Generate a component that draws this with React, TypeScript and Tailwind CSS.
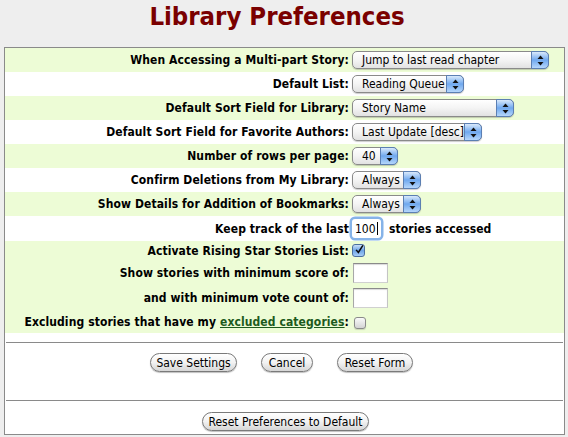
import React from "react";

function Arrows() {
  return (
    <svg width="7" height="11" viewBox="0 0 7 11" className="block">
      <polygon points="3.5,0.5 6.5,4 0.5,4" fill="#111" />
      <polygon points="0.5,7 6.5,7 3.5,10.5" fill="#111" />
    </svg>
  );
}

function Select({ value, className }: { value: string; className: string }) {
  return (
    <div
      className={
        "relative flex h-[18px] items-center rounded-[5px] border border-[#8a8a8a] bg-linear-to-b from-white via-[#f4f4f4] to-[#e2e2e2] shadow-[0_1px_1px_rgba(0,0,0,0.2)] " +
        className
      }
    >
      <span className="pl-[9px] text-[12px] leading-none text-black">{value}</span>
      <div className="absolute -top-px -right-px -bottom-px flex w-[18px] items-center justify-center rounded-r-[5px] border border-[#5b7fb3] bg-linear-to-b from-[#d9e9fb] via-[#6fa8ee] to-[#b5d6fb]">
        <Arrows />
      </div>
    </div>
  );
}

function Row({
  label,
  children,
  className,
}: {
  label: React.ReactNode;
  children?: React.ReactNode;
  className: string;
}) {
  return (
    <div className={"flex items-center " + className}>
      <div className="w-[344px] shrink-0 text-right text-[12px] font-bold leading-none tracking-[0.1px] text-black">
        {label}
      </div>
      <div className="ml-[3px] flex items-center">{children}</div>
    </div>
  );
}

function TextBox() {
  return (
    <div className="ml-[1px] h-[20px] w-[35px] border border-t-[#8a8a8a] border-r-[#c4c4c4] border-b-[#d0d0d0] border-l-[#a8a8a8] bg-white shadow-[inset_0_1px_1px_rgba(0,0,0,0.15)]" />
  );
}

function AquaButton({ children, className }: { children: React.ReactNode; className: string }) {
  return (
    <div
      className={
        "flex h-[19px] items-center justify-center rounded-full border border-[#7a7a7a] bg-linear-to-b from-white via-[#f2f2f2] to-[#d6d6d6] text-[12px] leading-none text-black shadow-[0_1px_1px_rgba(0,0,0,0.25)] " +
        className
      }
    >
      {children}
    </div>
  );
}

export default function App() {
  const green = "bg-[#edfcd6]";
  return (
    <div className="h-[437px] w-[568px] overflow-hidden bg-[#eeeeee] font-['DejaVu_Sans_Condensed',sans-serif]">
      <div className="h-[47px] pr-[14px] pt-[1px] text-center text-[25.5px] font-bold leading-[30px] text-[#7a0000]">
        Library Preferences
      </div>
      <div className="ml-[4px] w-[561px] border border-[#8a8a8a] bg-white">
        <Row label="When Accessing a Multi-part Story:" className={"h-[24px] " + green}>
          <Select value="Jump to last read chapter" className="w-[197px]" />
        </Row>
        <Row label="Default List:" className="h-[24px]">
          <Select value="Reading Queue" className="w-[112px]" />
        </Row>
        <Row label="Default Sort Field for Library:" className={"h-[24px] " + green}>
          <Select value="Story Name" className="w-[162px]" />
        </Row>
        <Row label="Default Sort Field for Favorite Authors:" className="h-[24px]">
          <Select value="Last Update [desc]" className="w-[130px]" />
        </Row>
        <Row label="Number of rows per page:" className={"h-[24px] " + green}>
          <Select value="40" className="w-[46px]" />
        </Row>
        <Row label="Confirm Deletions from My Library:" className="h-[24px]">
          <Select value="Always" className="w-[69px]" />
        </Row>
        <Row label="Show Details for Addition of Bookmarks:" className={"h-[24px] " + green}>
          <Select value="Always" className="w-[69px]" />
        </Row>
        <Row label="Keep track of the last" className="h-[25px]">
          <div className="flex h-[19px] w-[29px] items-center rounded-[3px] bg-white pl-[3px] text-[12px] leading-none text-black ring-[2.5px] ring-[#86b3e8]">
            100<span className="ml-px inline-block h-[13px] w-px bg-black" />
          </div>
          <span className="ml-[8px] text-[12px] font-bold leading-none tracking-[0.1px] text-black">stories accessed</span>
        </Row>
        <div className={green}>
          <Row label="Activate Rising Star Stories List:" className="h-[19px]">
            <div className="flex h-[13px] w-[13px] items-center justify-center rounded-[3px] border border-[#4b6e9f] bg-linear-to-b from-[#c9def7] via-[#6ea4e6] to-[#a5cdf7]">
              <svg width="12" height="13" viewBox="0 0 12 13" className="-mt-[3px] ml-[2px]">
                <path d="M1.5 7 L4.5 10.5 L10.5 1" fill="none" stroke="#0a0a0a" strokeWidth="2" />
              </svg>
            </div>
          </Row>
          <Row label="Show stories with minimum score of:" className="h-[25px]">
            <TextBox />
          </Row>
          <Row label="and with minimum vote count of:" className="h-[25px]">
            <TextBox />
          </Row>
          <Row
            label={
              <span>
                Excluding stories that have my{" "}
                <span className="text-[#1d5a1d] underline">excluded categories</span>:
              </span>
            }
            className="h-[23px]"
          >
            <div className="ml-[2px] mt-[3px] h-[12px] w-[12px] rounded-[3px] border border-[#8a8a8a] bg-linear-to-b from-[#fafafa] to-[#d4d4d4] shadow-[0_1px_1px_rgba(0,0,0,0.15)]" />
          </Row>
        </div>
        <div className="h-[9px]" />
        <div className="mx-px h-px bg-[#8a8a8a]" />
        <div className="flex h-[57px] justify-center gap-[24px] pr-[6px] pt-[10px]">
          <AquaButton className="w-[87px]">Save Settings</AquaButton>
          <AquaButton className="w-[52px]">Cancel</AquaButton>
          <AquaButton className="w-[76px]">Reset Form</AquaButton>
        </div>
        <div className="mx-px h-px bg-[#8a8a8a]" />
        <div className="flex h-[33px] justify-center pl-[2px] pt-[11px]">
          <AquaButton className="w-[167px]">Reset Preferences to Default</AquaButton>
        </div>
      </div>
    </div>
  );
}
